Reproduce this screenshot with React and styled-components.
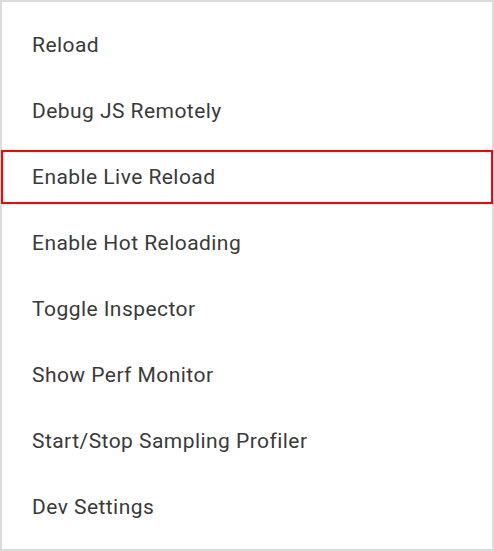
import React from 'react'
import styled, { createGlobalStyle } from 'styled-components'

const GlobalStyle = createGlobalStyle`
  body {
    margin: 0;
    background: #ffffff;
    font-family: Roboto, "Liberation Sans", sans-serif;
  }
`

const Panel = styled.div`
  box-sizing: border-box;
  width: 494px;
  height: 551px;
  border: 2px solid #dcdcdc;
  background: #ffffff;
  padding: 10px 0 9px;
  display: flex;
  flex-direction: column;
`

const Row = styled.div`
  height: 66px;
  padding: 6px 0;
  box-sizing: border-box;
`

const Item = styled.div`
  box-sizing: border-box;
  height: 54px;
  margin: 0 -1px;
  padding-left: 29px;
  display: flex;
  align-items: center;
  border: 2px solid ${(p) => (p.selected ? '#ff0000' : 'transparent')};
  font-size: 21px;
  color: #3a3a3a;
  letter-spacing: 0.45px;
`

const items = [
  'Reload',
  'Debug JS Remotely',
  'Enable Live Reload',
  'Enable Hot Reloading',
  'Toggle Inspector',
  'Show Perf Monitor',
  'Start/Stop Sampling Profiler',
  'Dev Settings',
]

const App = () => {
  return (
    <>
      <GlobalStyle />
      <Panel>
        {items.map((label, i) => (
          <Row key={label}>
            <Item selected={i === 2}>{label}</Item>
          </Row>
        ))}
      </Panel>
    </>
  )
}

export default App
